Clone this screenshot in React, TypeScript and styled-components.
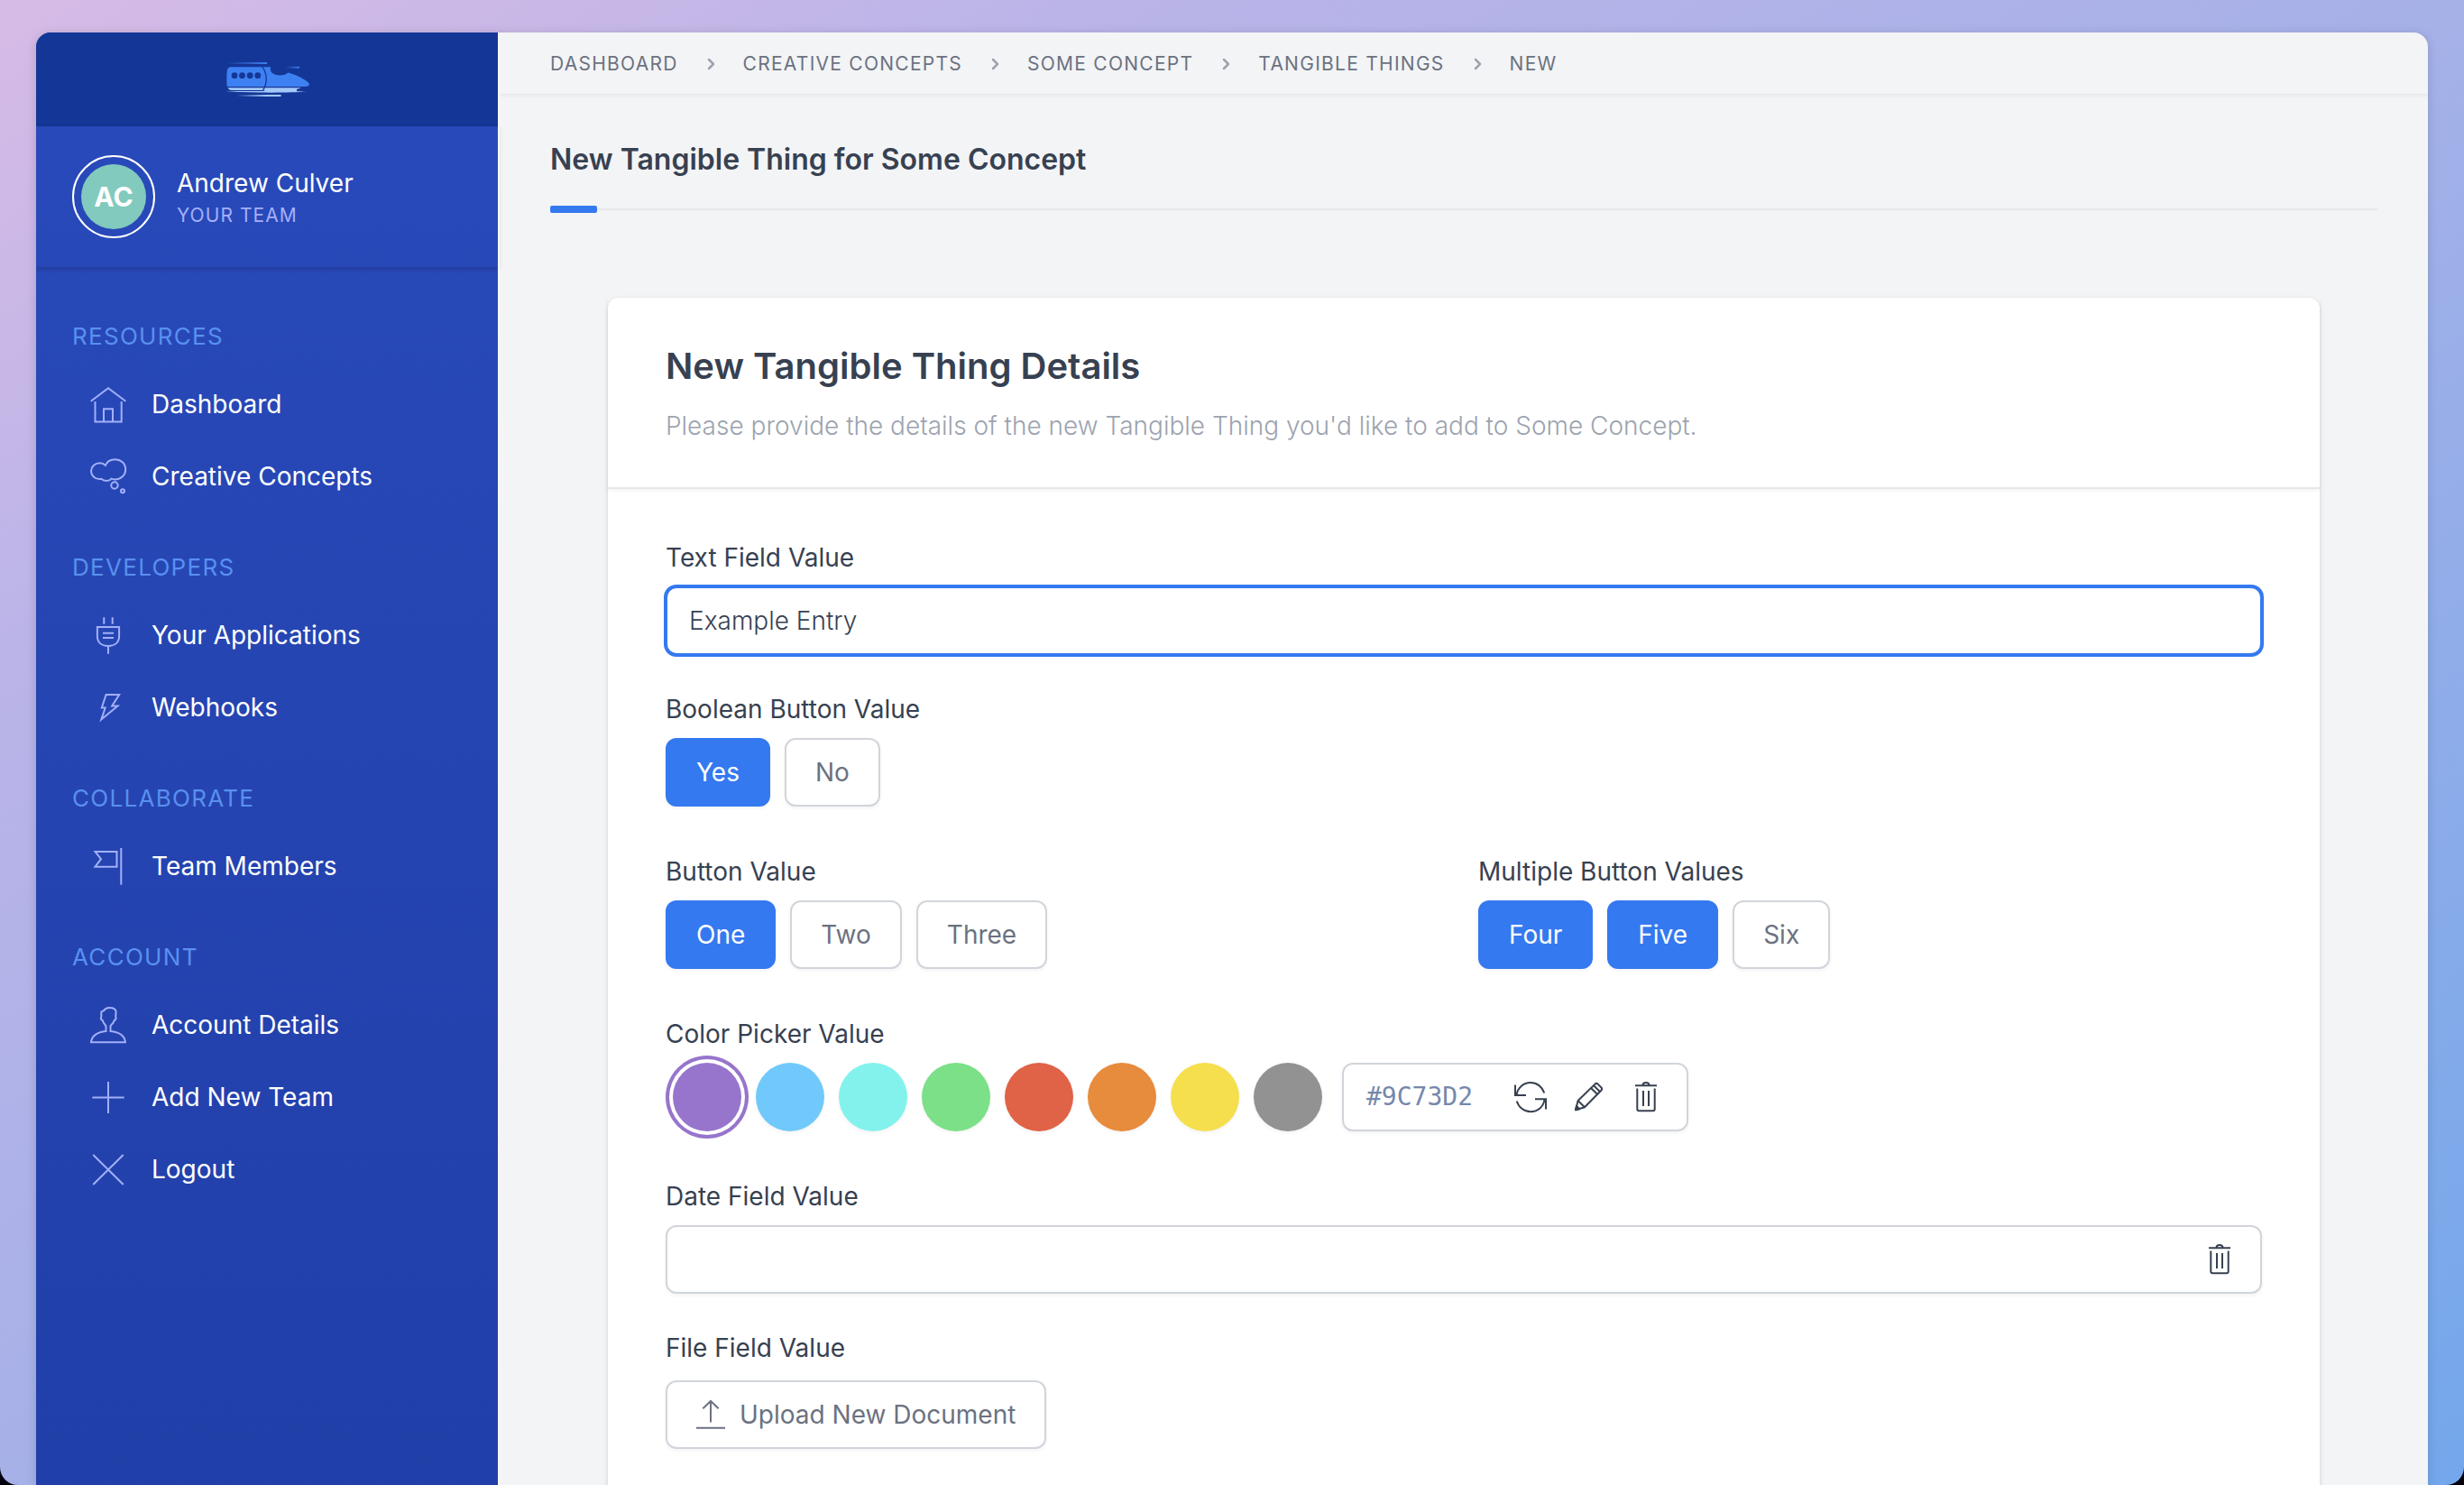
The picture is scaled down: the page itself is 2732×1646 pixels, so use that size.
import React, { useState } from "react";
import styled, { createGlobalStyle } from "styled-components";

const blue = "#3479f0";
const ink = "#374151";
const muted = "#6b7280";
const line = "#d1d5db";
const softShadow = "0 2px 4px rgba(0, 0, 0, 0.05)";

const GlobalStyle = createGlobalStyle`
  *, *::before, *::after { box-sizing: border-box; }
  body {
    margin: 0;
    background: #05030f;
    color: ${ink};
    font-family: Inter, "Liberation Sans", sans-serif;
    font-size: 28px;
    line-height: 40px;
  }
  button, input { font: inherit; color: inherit; }
  h1, h2, p, ul, ol { margin: 0; padding: 0; }
  ul, ol { list-style: none; }
  a { color: inherit; text-decoration: none; }
`;

const Backdrop = styled.div`
  height: 100vh;
  padding: 36px 40px 0;
  display: flex;
  overflow: hidden;
  border-radius: 0 0 20px 20px;
  background: linear-gradient(to bottom right, #d7bbe6 0%, #bab4e8 23%, #a6b1e8 50%, #73a7eb 100%);
`;

const Window = styled.div`
  flex: 1;
  min-width: 0;
  display: flex;
  overflow: hidden;
  border-radius: 16px 16px 0 0;
  background: #f3f4f6;
  box-shadow: 0 2px 12px rgba(0, 0, 0, 0.15);
`;

/* Sidebar */

const Sidebar = styled.aside`
  flex: none;
  width: 512px;
  display: flex;
  flex-direction: column;
  background: linear-gradient(#294abb, #213fa8);
`;

const Brand = styled.a`
  height: 104px;
  flex: none;
  display: flex;
  align-items: center;
  justify-content: center;
  background: #143696;
`;

const Profile = styled.div`
  flex: none;
  display: flex;
  align-items: center;
  gap: 24px;
  height: 156px;
  padding: 0 40px;
  box-shadow: 0 2px 6px rgba(0, 0, 0, 0.2);
`;

const AvatarRing = styled.div`
  padding: 8px;
  border: 2px solid #fff;
  border-radius: 50%;
`;

const Avatar = styled.div`
  width: 72px;
  height: 72px;
  display: grid;
  place-items: center;
  border-radius: 50%;
  background: #82cabe;
  color: #fff;
  font-size: 30px;
  font-weight: 700;
`;

const ProfileText = styled.div`
  padding-top: 6px;
  line-height: 36px;
`;

const ProfileName = styled.div`
  color: #fff;
`;

const ProfileTeam = styled.div`
  color: #a3b0f9;
  font-size: 21px;
  letter-spacing: 0.05em;
  text-transform: uppercase;
`;

const Nav = styled.nav`
  display: flex;
  flex-direction: column;
  gap: 41px;
  padding: 57px 40px;
`;

const NavTitle = styled.h2`
  margin-bottom: 15px;
  color: #5990ee;
  font-size: 26px;
  line-height: 40px;
  font-weight: 400;
  letter-spacing: 0.05em;
  text-transform: uppercase;
`;

const NavLink = styled.a`
  display: flex;
  align-items: center;
  gap: 28px;
  height: 80px;
  padding: 0 20px;
  color: #fff;
`;

const Glyph = styled.svg<{ $size: number; $tone?: string }>`
  flex: none;
  width: ${(p) => p.$size}px;
  height: ${(p) => p.$size}px;
  overflow: visible;
  fill: none;
  stroke: ${(p) => p.$tone ?? "#a3b0f9"};
  stroke-width: 2;
`;

/* Main column */

const Main = styled.main`
  flex: 1;
  min-width: 0;
  border-left: 2px solid #f7f8f9;
  overflow-y: auto;
  scrollbar-width: none;
`;

const Crumbs = styled.nav`
  height: 68px;
  padding: 2px 56px 0;
  display: flex;
  align-items: center;
  box-shadow: 0 2px 4px rgba(0, 0, 0, 0.06);
`;

const CrumbList = styled.ol`
  display: flex;
`;

const Crumb = styled.li`
  display: flex;
  align-items: center;
  color: ${muted};
  font-size: 21px;
  line-height: 28px;
  letter-spacing: 0.06em;
  text-transform: uppercase;
`;

const CrumbArrow = styled.svg`
  width: 28px;
  height: 28px;
  margin: 0 22px;
  fill: none;
  stroke: #9ca3af;
  stroke-width: 2.5;
  stroke-linecap: round;
  stroke-linejoin: round;
`;

const PageHead = styled.header`
  margin: 53px 56px 0;
`;

const PageTitle = styled.h1`
  font-size: 32px;
  line-height: 40px;
  font-weight: 600;
`;

const Rule = styled.div`
  display: flex;
  align-items: center;
  height: 8px;
  margin-top: 31px;

  &::before {
    content: "";
    width: 52px;
    height: 8px;
    border-radius: 2px;
    background: ${blue};
  }
  &::after {
    content: "";
    flex: 1;
    height: 2px;
    background: #e5e7eb;
  }
`;

const Card = styled.section`
  margin: 94px 120px 56px;
  border-radius: 12px;
  background: #fff;
  box-shadow: 0 2px 6px rgba(0, 0, 0, 0.1), 0 2px 4px rgba(0, 0, 0, 0.06);
`;

const CardHead = styled.header`
  padding: 48px 64px;
  border-bottom: 2px solid #e5e7eb;
  box-shadow: 0 2px 4px rgba(0, 0, 0, 0.05);
`;

const CardTitle = styled.h2`
  font-size: 40px;
  line-height: 56px;
  font-weight: 600;
`;

const CardText = styled.p`
  margin-top: 18px;
  color: #9ca3af;
  font-weight: 300;
`;

const Form = styled.form`
  display: flex;
  flex-direction: column;
  gap: 40px;
  padding: 56px 64px;
`;

const Field = styled.div<{ $roomy?: boolean }>`
  display: flex;
  flex-direction: column;
  gap: 12px;
  padding-bottom: ${(p) => (p.$roomy ? 12 : 0)}px;
`;

const Label = styled.label`
  display: block;
`;

const Columns = styled.div`
  display: grid;
  grid-template-columns: 1fr 1fr;
  gap: 32px;
`;

const TextBox = styled.input`
  width: 100%;
  height: 76px;
  padding: 0 24px;
  border: 2px solid ${blue};
  border-radius: 12px;
  outline: none;
  background: #fff;
  box-shadow: 0 0 0 2px ${blue};
  font-weight: 300;
`;

const Outlined = styled.div`
  display: flex;
  align-items: center;
  height: 76px;
  padding: 0 27px;
  border: 2px solid ${line};
  border-radius: 12px;
  background: #fff;
  box-shadow: ${softShadow};
`;

const BareInput = styled.input`
  flex: 1;
  min-width: 0;
  border: 0;
  padding: 0;
  outline: none;
  background: none;
  font-weight: 300;
`;

const ButtonRow = styled.div`
  display: flex;
  gap: 16px;
`;

const Choice = styled.button<{ $on?: boolean }>`
  display: flex;
  align-items: center;
  gap: 16px;
  height: 76px;
  padding: 0 32px;
  border: 2px solid ${(p) => (p.$on ? blue : line)};
  border-radius: 12px;
  background: ${(p) => (p.$on ? blue : "#fff")};
  color: ${(p) => (p.$on ? "#fff" : muted)};
  box-shadow: ${softShadow};
  cursor: pointer;
`;

const UploadRow = styled.div`
  display: flex;
  padding-top: 4px;
`;

const Swatches = styled.div`
  display: flex;
  align-items: center;
  gap: 16px;
  padding-left: 8px;
`;

const Swatch = styled.button<{ $color: string; $on: boolean }>`
  width: 76px;
  height: 76px;
  padding: 0;
  border: 0;
  border-radius: 50%;
  background: ${(p) => p.$color};
  box-shadow: ${(p) => (p.$on ? `0 0 0 4px #fff, 0 0 0 8px ${p.$color}` : softShadow)};
  cursor: pointer;
`;

const HexBox = styled(Outlined)`
  gap: 28px;
  margin-left: 6px;
  padding-left: 25px;
`;

const HexValue = styled.output`
  margin-right: 18px;
  color: #7688ab;
  font-family: "DejaVu Sans Mono", monospace;
`;

const IconButton = styled.button`
  display: flex;
  padding: 0;
  border: 0;
  background: none;
  cursor: pointer;
`;

/* Icons */

const glyphs: Record<string, React.ReactNode> = {
  home: (
    <>
      <path d="M.7 16.7 20 2.3l19.3 14.4" />
      <path d="M5.5 17v22.4h29.2V17" />
      <path d="M15 39V25.3h10V39" />
    </>
  ),
  thought: (
    <>
      <path d="M16.8 7.8C15 6 13 5.3 10.8 5.3 5 5.3 1 9.3 1 14.2c0 5 4.2 8.8 9.3 8.8.8 0 1.4-.1 2-.2 1.5 1.5 3.8 2.2 6 2.2 2.4 0 4.2-1 5.2-2.3 1.2.5 2.6.7 4 .7C34 23.4 39.2 18.8 39.2 12.3 39.2 5.800 34 1.2 27.5 1.2c-5 0-8.9 2.6-10.7 6.6z" />
      <circle cx="27" cy="30" r="3.7" />
      <circle cx="36" cy="36.3" r="2" />
    </>
  ),
  plug: (
    <>
      <path d="M15.3.3v7.4M24.7.3v7.4M20 32.3v8.4M14 17.7h12M14 23h12" />
      <path d="M7.9 11h24.2v10c0 7-4.5 11-12.1 11S7.9 28 7.9 21z" />
    </>
  ),
  bolt: <path d="M17.6 6h14.6l-8 12.4h6.3L12.3 33.5l4.4-13h-3.9z" />,
  flag: (
    <>
      <path d="M34.3 0v40.7" />
      <path d="M29.5 4H5.5L12 12.2 5.5 20.7h24z" />
    </>
  ),
  user: (
    <path d="M17.5 27v-5.8c-1.700-1.800-3.300-4-3.900-6.400-1.600-.4-2.300-2.300-1.300-3.800V5.800c.7-1 1.500-1.300 2.700-1.500C16.500 2 18.300 1 21 1c4.500 0 7.600 1.800 7.600 4.600l-.4 5.400c1 1.500.3 3.400-1.300 3.800-.6 2.400-2.400 4.600-4.400 6.400V27C32 28 38.300 32 39 39.300H1C1.700 32 8.500 28 17.500 27z" />
  ),
  plus: <path d="M20 3v35M2.3 20.5h35.4" />,
  cross: <path d="M3.3 4l33.4 33M36.7 4 3.300 37" />,
};

const NavIcon = ({ name }: { name: string }) => (
  <Glyph $size={40} viewBox="0 0 40 40" aria-hidden="true">
    {glyphs[name]}
  </Glyph>
);

const RefreshIcon = () => (
  <Glyph $size={36} $tone={ink} viewBox="0 0 36 36" aria-hidden="true">
    <path d="M1 4.5V16h12M35 31.5V20.2H23" />
    <path d="M2.6 15.5C3.5 8 10 2 18 2c7 0 13 4.5 15.3 11.5M33.4 21C32.5 28.5 26 34.2 18 34.2c-7 0-13-4.5-15.3-11.7" />
  </Glyph>
);

const PencilIcon = () => (
  <Glyph $size={36} $tone={ink} viewBox="0 0 36 36" strokeLinejoin="round" aria-hidden="true">
    <path d="M4 32.3 6.6 22 25.5 3.6c1-.9 2.3-.9 3.2 0l3.800 3.9c.9.9.9 2.1 0 3L14 29.2z" />
    <path d="M6.6 22l7.4 7.2M21 8l7.3 7M24 5.2l7.2 7" />
    <path d="M4 32.3l1-4.3 3.2 3.2z" fill={ink} />
  </Glyph>
);

const TrashIcon = () => (
  <Glyph $size={36} $tone={ink} viewBox="0 0 36 36" aria-hidden="true">
    <path d="M6 5.3h24M14.5 5c0-4 7-4 7 0" />
    <path d="M8.3 8.5v22.8c0 1.2.8 2 2 2h15.4c1.2 0 2-.8 2-2V8.5M15 11v17M21 11v17" />
  </Glyph>
);

const UploadIcon = () => (
  <Glyph $size={32} $tone={muted} viewBox="0 0 32 32" aria-hidden="true">
    <path d="M16 1v23.5M7.3 9.3 16 1l8.7 8.3M0 30.7h32" />
  </Glyph>
);

const TrainLogo = () => (
  <svg width="96" height="44" viewBox="0 0 96 44" role="img" aria-label="Bullet Train">
    <defs>
      <linearGradient id="fadeBlue">
        <stop offset="0" stopColor="#3d80f2" stopOpacity="0" />
        <stop offset="1" stopColor="#3d80f2" />
      </linearGradient>
      <linearGradient id="fadePale">
        <stop offset="0" stopColor="#a3c8fa" stopOpacity="0" />
        <stop offset="0.7" stopColor="#a3c8fa" />
      </linearGradient>
    </defs>
    <rect x="4" y="3" width="44" height="2" fill="url(#fadeBlue)" />
    <rect x="68" y="7.8" width="16" height="1.8" fill="url(#fadeBlue)" />
    <path
      d="M8 8.3h44.4c-1 1.5-.9 3.7.4 5.5 2 2.5 5.6 3.7 9.7 3.7 3.7 0 7-1 9-3 6.5 1.8 13 4.5 17.5 7.5 3.5 2.3 6 4 6 5.3 0 1.7-2 2.7-5 2.7H3.7c-.5-6-.5-12 0-17C4.2 9.8 5.5 8.3 8 8.3z"
      fill="#3d80f2"
    />
    <g fill="#143696">
      <circle cx="12" cy="17.7" r="3.4" />
      <circle cx="20.5" cy="17.7" r="3.4" />
      <circle cx="29.2" cy="17.7" r="3.4" />
      <circle cx="37.8" cy="17.7" r="3.4" />
    </g>
    <path d="M4.7 31.3H86l-5 1.8V36H50l-7-2H9c-2.5 0-3.8-1-4.3-2.7z" fill="#a3c8fa" />
    <path d="M2 35.7C14 34.6 30 35 49 35l43 .3C80 36.6 60 36.8 40 36.6z" fill="#a3c8fa" />
    <path d="M42.9 8c5.5 8 5.8 18 .6 26.3" fill="none" stroke="#143696" strokeWidth="1.3" />
    <rect x="13.5" y="39" width="50" height="2" fill="url(#fadePale)" />
  </svg>
);

/* Data */

const sections = [
  { title: "Resources", items: [["home", "Dashboard"], ["thought", "Creative Concepts"]] },
  { title: "Developers", items: [["plug", "Your Applications"], ["bolt", "Webhooks"]] },
  { title: "Collaborate", items: [["flag", "Team Members"]] },
  { title: "Account", items: [["user", "Account Details"], ["plus", "Add New Team"], ["cross", "Logout"]] },
];

const crumbs = ["Dashboard", "Creative Concepts", "Some Concept", "Tangible Things", "New"];

const colors = [
  { name: "#9C73D2", paint: "#9775cc" },
  { name: "#48CDFE", paint: "#70c9fa" },
  { name: "#53F3ED", paint: "#84f2ec" },
  { name: "#47E37F", paint: "#7be088" },
  { name: "#F2593D", paint: "#e06247" },
  { name: "#F68421", paint: "#e78b3d" },
  { name: "#F9DE00", paint: "#f5df4d" },
  { name: "#929292", paint: "#929292" },
];

interface ChoiceFieldProps {
  id: string;
  label: string;
  options: string[];
  initial: string[];
  multiple?: boolean;
}

const ChoiceField = ({ id, label, options, initial, multiple }: ChoiceFieldProps) => {
  const [picked, setPicked] = useState(initial);
  const toggle = (option: string) => {
    if (!multiple) return setPicked([option]);
    setPicked(picked.includes(option) ? picked.filter((o) => o !== option) : [...picked, option]);
  };
  return (
    <Field $roomy role="group" aria-labelledby={id}>
      <Label as="span" id={id}>
        {label}
      </Label>
      <ButtonRow>
        {options.map((option) => (
          <Choice
            key={option}
            type="button"
            $on={picked.includes(option)}
            aria-pressed={picked.includes(option)}
            onClick={() => toggle(option)}
          >
            {option}
          </Choice>
        ))}
      </ButtonRow>
    </Field>
  );
};

export default function App() {
  const [color, setColor] = useState(colors[0].name);
  const [text, setText] = useState("Example Entry");
  const [date, setDate] = useState("");

  return (
    <>
      <GlobalStyle />
      <Backdrop>
        <Window>
          <Sidebar>
            <Brand href="#">
              <TrainLogo />
            </Brand>
            <Profile>
              <AvatarRing>
                <Avatar>AC</Avatar>
              </AvatarRing>
              <ProfileText>
                <ProfileName>Andrew Culver</ProfileName>
                <ProfileTeam>Your Team</ProfileTeam>
              </ProfileText>
            </Profile>
            <Nav aria-label="Main">
              {sections.map((section) => (
                <div key={section.title}>
                  <NavTitle>{section.title}</NavTitle>
                  <ul>
                    {section.items.map(([icon, label]) => (
                      <li key={label}>
                        <NavLink href="#">
                          <NavIcon name={icon} />
                          {label}
                        </NavLink>
                      </li>
                    ))}
                  </ul>
                </div>
              ))}
            </Nav>
          </Sidebar>

          <Main>
            <Crumbs aria-label="Breadcrumb">
              <CrumbList>
                {crumbs.map((crumb, i) => (
                  <Crumb key={crumb}>
                    {i > 0 && (
                      <CrumbArrow viewBox="0 0 28 28" aria-hidden="true">
                        <path d="M12 9l5 5-5 5" />
                      </CrumbArrow>
                    )}
                    <a href="#">{crumb}</a>
                  </Crumb>
                ))}
              </CrumbList>
            </Crumbs>

            <PageHead>
              <PageTitle>New Tangible Thing for Some Concept</PageTitle>
              <Rule />
            </PageHead>

            <Card>
              <CardHead>
                <CardTitle>New Tangible Thing Details</CardTitle>
                <CardText>
                  Please provide the details of the new Tangible Thing you'd like to add to Some Concept.
                </CardText>
              </CardHead>
              <Form>
                <Field>
                  <Label htmlFor="text-field">Text Field Value</Label>
                  <TextBox id="text-field" value={text} onChange={(e) => setText(e.target.value)} />
                </Field>

                <ChoiceField id="boolean" label="Boolean Button Value" options={["Yes", "No"]} initial={["Yes"]} />

                <Columns>
                  <ChoiceField
                    id="single"
                    label="Button Value"
                    options={["One", "Two", "Three"]}
                    initial={["One"]}
                  />
                  <ChoiceField
                    id="multiple"
                    label="Multiple Button Values"
                    options={["Four", "Five", "Six"]}
                    initial={["Four", "Five"]}
                    multiple
                  />
                </Columns>

                <Field $roomy role="group" aria-labelledby="color">
                  <Label as="span" id="color">
                    Color Picker Value
                  </Label>
                  <Swatches>
                    {colors.map(({ name, paint }) => (
                      <Swatch
                        key={name}
                        type="button"
                        $color={paint}
                        $on={name === color}
                        aria-label={name}
                        aria-pressed={name === color}
                        onClick={() => setColor(name)}
                      />
                    ))}
                    <HexBox>
                      <HexValue>{color}</HexValue>
                      <IconButton type="button" aria-label="Shuffle color">
                        <RefreshIcon />
                      </IconButton>
                      <IconButton type="button" aria-label="Edit color">
                        <PencilIcon />
                      </IconButton>
                      <IconButton type="button" aria-label="Clear color">
                        <TrashIcon />
                      </IconButton>
                    </HexBox>
                  </Swatches>
                </Field>

                <Field>
                  <Label htmlFor="date-field">Date Field Value</Label>
                  <Outlined>
                    <BareInput id="date-field" value={date} onChange={(e) => setDate(e.target.value)} />
                    <IconButton type="button" aria-label="Clear date" onClick={() => setDate("")}>
                      <TrashIcon />
                    </IconButton>
                  </Outlined>
                </Field>

                <Field role="group" aria-labelledby="file">
                  <Label as="span" id="file">
                    File Field Value
                  </Label>
                  <UploadRow>
                    <Choice type="button">
                      <UploadIcon />
                      Upload New Document
                    </Choice>
                  </UploadRow>
                </Field>
              </Form>
            </Card>
          </Main>
        </Window>
      </Backdrop>
    </>
  );
}
